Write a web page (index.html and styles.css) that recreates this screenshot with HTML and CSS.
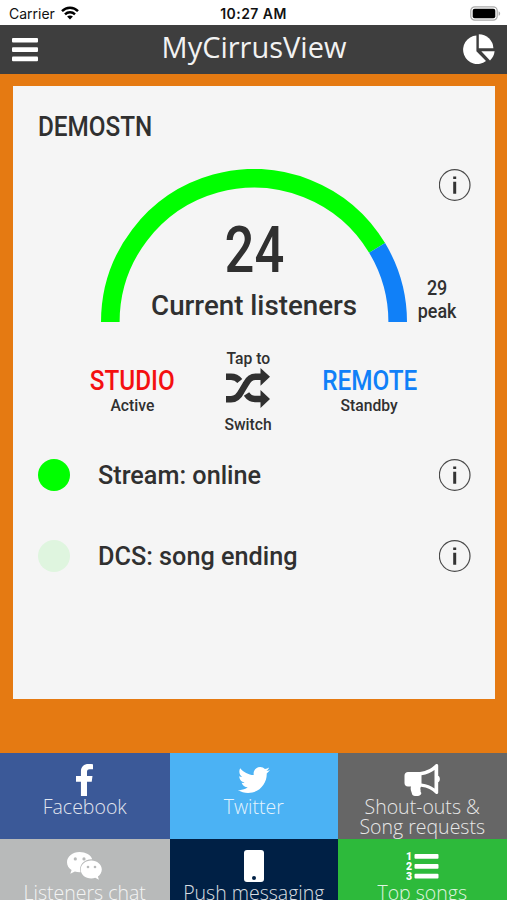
FILE: index.html
```html
<!DOCTYPE html>
<html lang="en">
<head>
<meta charset="utf-8">
<title>MyCirrusView</title>
<link rel="stylesheet" href="styles.css">
</head>
<body>
<div class="status">
  <div class="carrier"><span>Carrier</span>
    <svg width="18" height="14" viewBox="0 0 18 14" fill="none" stroke="#000" stroke-width="2.4"><path d="M1 5.2C5.4.6 12.6.6 17 5.2M4 8.3c2.8-2.8 7.2-2.8 10 0"/><path d="M9 13.6l-2.9-3.1c1.6-1.5 4.2-1.5 5.8 0z" fill="#000" stroke="none"/></svg>
  </div>
  <div class="time">10:27 AM</div>
  <svg class="battery" width="31" height="15" viewBox="0 0 31 15"><rect x=".8" y=".8" width="26.4" height="13.4" rx="4" fill="#fff" stroke="#aaa" stroke-width="1.2"/><rect x="2.7" y="2.8" width="22.6" height="9.4" rx="2" fill="#000"/><path d="M28.6 5.2c2 .8 2 3.8 0 4.6z" fill="#aaa"/></svg>
</div>
<header class="header">
  <svg width="26" height="24" viewBox="0 0 26 24" fill="#fff"><rect y="0" width="26" height="4.6" rx="1"/><rect y="9.3" width="26" height="4.6" rx="1"/><rect y="18.6" width="26" height="4.6" rx="1"/></svg>
  <h1>MyCirrusView</h1>
  <svg class="pie" width="33" height="31" viewBox="0 0 33 31" fill="#fff"><path d="M13.400 1.600V17.200L23 27A14.200 14.200 0 1 1 13.400 1.600z"/><path d="M15.800.2A14.600 14.600 0 0 1 30.400 14.200H15.800z"/><path d="M18.300 17.200H31.600a14.500 14.500 0 0 1-4.600 9.200z"/></svg>
</header>
<main class="main">
  <section class="card">
    <h2 class="station"><span class="fit">DEMOSTN</span></h2>
    <div class="gauge">
      <div class="dial">
        <svg width="306" height="153" viewBox="0 0 306 153" fill="none" stroke-width="18.600"><path d="M9.300 153A143.700 143.700 0 0 1 276.100 78.900" stroke="#0f0"/><path d="M276.100 78.900A143.700 143.700 0 0 1 296.700 153" stroke="#1080f8"/></svg>
        <div class="reading">
          <div class="count"><span class="fit">24</span></div>
          <div class="caption"><span class="fit">Current listeners</span></div>
        </div>
      </div>
      <div class="side">
        <svg class="info" width="32" height="32" viewBox="0 0 32 32"><circle cx="15.700" cy="16" r="15.300" fill="none" stroke="#4a4a4a" stroke-width="1.200"/><path d="M14.200 7.500h3v2.600h-3zM14.200 12.700h3v12h-3z" fill="#333"/></svg>
        <div class="peak"><span class="fit">29</span><span class="fit">peak</span></div>
      </div>
    </div>
    <div class="switcher">
      <div class="source studio"><b><span class="fit">STUDIO</span></b><small><span class="fit">Active</span></small></div>
      <div class="toggle"><small><span class="fit">Tap to</span></small>
        <svg width="45" height="40" viewBox="0 0 45 40" fill="none" stroke="#303030" stroke-width="6.400"><path d="M0 8.700h5c4 0 6.500 1.500 8.800 4.300M20.500 26c2.400 3.600 4.500 5 8.500 5h7"/><path d="M0 31.200h5c5 0 8-3 10.500-8l4.500-7.500c2.500-5 5-7 9.500-7H36"/><path d="M34.500 0L44 8.800 34.500 17.800zM34.500 22L44 31 34.500 40z" fill="#303030" stroke="none"/></svg>
        <small><span class="fit">Switch</span></small></div>
      <div class="source remote"><b><span class="fit">REMOTE</span></b><small><span class="fit">Standby</span></small></div>
    </div>
    <div class="row"><i class="dot on"></i><p><span class="fit">Stream: online</span></p>
      <svg class="info" width="32" height="32" viewBox="0 0 32 32"><circle cx="15.700" cy="16" r="15.300" fill="none" stroke="#4a4a4a" stroke-width="1.200"/><path d="M14.200 7.500h3v2.600h-3zM14.200 12.700h3v12h-3z" fill="#333"/></svg></div>
    <div class="row"><i class="dot"></i><p><span class="fit">DCS: song ending</span></p>
      <svg class="info" width="32" height="32" viewBox="0 0 32 32"><circle cx="15.700" cy="16" r="15.300" fill="none" stroke="#4a4a4a" stroke-width="1.200"/><path d="M14.200 7.500h3v2.600h-3zM14.200 12.700h3v12h-3z" fill="#333"/></svg></div>
  </section>
</main>
<nav class="tiles">
  <a class="tile facebook"><svg width="17" height="32" viewBox="0 0 264 512" preserveAspectRatio="none"><path d="M76.700 512V283H0v-91h76.700v-71.700C76.700 42.400 124.300 0 193.800 0c33.300 0 61.900 2.500 70.200 3.600V85h-48.200c-37.800 0-45.100 18-45.100 44.300V192H256l-11.700 91h-73.600v229"/></svg><span>Facebook</span></a>
  <a class="tile twitter"><svg width="32" height="32" viewBox="0 0 512 512"><path d="M459.370 151.716c.325 4.548.325 9.097.325 13.645 0 138.720-105.583 298.558-298.558 298.558-59.452 0-114.680-17.219-161.137-47.106 8.447.974 16.568 1.299 25.340 1.299 49.055 0 94.213-16.568 130.274-44.832-46.132-.975-84.792-31.188-98.112-72.772 6.498.974 12.995 1.624 19.818 1.624 9.421 0 18.843-1.300 27.614-3.573-48.081-9.747-84.143-51.980-84.143-102.985v-1.299c13.969 7.797 30.214 12.670 47.431 13.319-28.264-18.843-46.781-51.005-46.781-87.391 0-19.492 5.197-37.360 14.294-52.954 51.655 63.675 129.300 105.258 216.365 109.807-1.624-7.797-2.599-15.918-2.599-24.040 0-57.828 46.782-104.934 104.934-104.934 30.213 0 57.502 12.670 76.670 33.137 23.715-4.548 46.456-13.320 66.599-25.340-7.798 24.366-24.366 44.833-46.132 57.827 21.117-2.273 41.584-8.122 60.426-16.243-14.292 20.791-32.161 39.308-52.628 54.253z"/></svg><span>Twitter</span></a>
  <a class="tile shout"><svg width="36" height="32" viewBox="0 0 36 32"><path fill-rule="evenodd" d="M4 8h12C23 7 28 4 31.500.5c1.300-1 2.700-.3 2.700 1V11.700c2.200 1 2.200 5.600 0 6.500V28.500c0 1.500-1.500 2-2.700 1-3.500-3.500-8-6-14.500-6.700-1.500 2 .2 3.700-.5 5 2 1.500 0 4-2.800 4.100-2.200.1-4.700.1-5.500-1.400-.8-3-2.200-5-1.200-8H4c-2.200 0-3.500-1.500-3.500-3.500v-7.500C.5 9.500 2 8 4 8zM17.500 11.200v8.300c5.500.6 9.500 2.400 13 5V6c-3.500 2.700-7.500 4.500-13 5.200z"/></svg><span>Shout-outs &amp;<br>Song requests</span></a>
  <a class="tile chat"><svg width="35" height="32" viewBox="0 0 35 32"><path d="M12.500 2C5.600 2 0 6.500 0 12.200c0 3.300 1.700 5.900 4.600 7.900l-1.300 3.700 4.600-2.200c1.900.5 3.400.8 5.600.7-2.200-7.500 4-13.300 11.700-13C24 5 18.500 2 12.500 2z"/><path d="M24.300 10.500c-6 0-10.600 4-10.600 9s4.600 9 10.600 9c1.400 0 2.700-.3 4-.7l3.600 2-1-3.200c2.300-1.700 3.900-4.200 3.900-7.100 0-5-4.700-9-10.500-9z"/><g fill="#b8baba"><circle cx="8.300" cy="8.900" r="1.600"/><circle cx="17" cy="8.900" r="1.600"/><circle cx="21" cy="17" r="1.300"/><circle cx="28" cy="17" r="1.300"/></g></svg><span>Listeners chat</span></a>
  <a class="tile push"><svg width="20" height="32" viewBox="0 0 20 32"><rect width="20" height="32" rx="3"/><circle cx="10" cy="28" r="2" fill="#002045"/></svg><span>Push messaging</span></a>
  <a class="tile songs"><svg width="33" height="32" viewBox="0 0 33 32"><g class="num"><text x="0" y="10">1</text><text x="0" y="20">2</text><text x="0" y="30">3</text></g><rect x="8.500" y="4" width="24" height="4.800" rx="1"/><rect x="8.500" y="14" width="24" height="4.800" rx="1"/><rect x="8.500" y="23.700" width="24" height="4.800" rx="1"/></svg><span>Top songs</span></a>
</nav>
</body>
</html>
```
FILE: styles.css
```css
* { box-sizing: border-box; }
html, body { margin: 0; height: 900px; overflow: hidden; }
body { width: 507px; background: #e57a12; font-family: Roboto, sans-serif; color: #303030; }
svg { display: block; flex: none; }
h1, h2, p { margin: 0; font-weight: inherit; }

.status { display: grid; grid-template-columns: 1fr auto 1fr; align-items: center; height: 25px; padding: 2px 6px 0; background: #fff; color: #111; font: 14px Inter, sans-serif; }
.carrier { display: flex; gap: 6px; align-items: center; padding-left: 3px; }
.carrier svg { margin-top: -2px; }
.time { font-weight: 600; letter-spacing: .45px; }
.battery { justify-self: end; }

.header { display: flex; justify-content: space-between; align-items: center; height: 49px; padding: 0 11px 0 12px; background: #3e3e3e; }
.header h1 { font: 400 29px/40px "Open Sans", sans-serif; color: #f2f2f2; margin: -6px 0 0 7px; }

.main { height: 679px; padding: 12px 12.500px 0 13px; }
.card { height: 613px; padding-top: 26px; background: #f5f5f5; font-weight: 500; }
.fit { display: inline-block; white-space: nowrap; transform: scaleX(.9); }

.station { height: 30px; padding-left: 25px; font-size: 27px; line-height: 31px; }
.station .fit, .row .fit { transform-origin: left; }

.gauge { display: grid; grid-template-columns: 306px 1fr; margin-top: 27px; padding: 0 24px 0 88px; height: 153px; }
.dial { display: grid; }
.dial > * { grid-area: 1 / 1; }
.reading { display: flex; flex-direction: column; align-items: center; padding-top: 48px; }
.count { font-size: 64px; line-height: 67px; }
.count .fit { transform: scaleX(.82); }
.caption { font-size: 28px; line-height: 34px; margin-top: 5px; }
.caption .fit { transform: scaleX(.99); }
.side { display: flex; flex-direction: column; justify-content: space-between; }
.side .info { align-self: flex-end; }
.peak { display: flex; flex-direction: column; align-items: center; width: 60px; font-size: 19.500px; line-height: 23px; }
.peak .fit { transform: scaleX(.92); }

.switcher { display: grid; grid-template-columns: 119px 113px 129px; margin-top: 28px; padding-left: 60px; height: 85px; text-align: center; }
.switcher small { font-size: 16px; line-height: 17px; }
.switcher small .fit { transform: scaleX(.98); }
.source { display: flex; flex-direction: column; align-items: center; padding-top: 16px; }
.source b { font-weight: 500; font-size: 27px; line-height: 30px; }
.source small { margin-top: 1px; }
.studio b { color: #f41010; }
.remote b { color: #1080f8; }
.toggle { display: flex; flex-direction: column; align-items: center; justify-content: space-between; height: 83px; }
.toggle svg { margin: -6px 0 2px; }

.row { display: grid; grid-template-columns: 60px 1fr 32px; align-items: center; height: 80.500px; padding: 0 24px 0 25px; font-size: 26px; line-height: 30px; }
.row .fit { transform: scaleX(.97); }
.dot { width: 32px; height: 32px; border-radius: 50%; background: #dff5df; }
.dot.on { background: #0f0; }

.tiles { display: grid; grid-template-columns: 169.500px 168.500px 168.500px; grid-template-rows: 85.500px 85.500px; }
.tile { display: flex; flex-direction: column; align-items: center; padding-top: 11px; color: #fff; text-align: center; font: 300 19.500px/20px "Open Sans", sans-serif; }
.tile svg { fill: #fff; }
.tile span { opacity: .85; margin-top: 1px; }
.facebook { background: #3b5998; }
.twitter { background: #4bb2f4; }
.shout { background: #666; }
.chat { background: #b8baba; }
.push { background: #002045; }
.songs { background: #2dba3b; }
.num { font: 900 10.500px Roboto, sans-serif; }
```
